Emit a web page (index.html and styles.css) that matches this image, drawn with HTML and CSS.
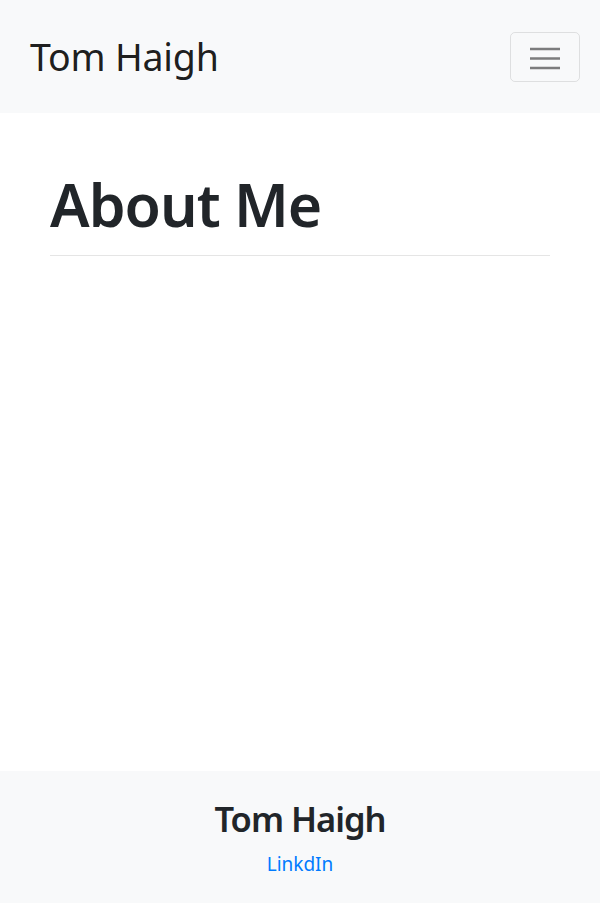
FILE: index.html
```html
<!DOCTYPE html>
<html lang="en">
<head>
<meta charset="utf-8">
<title>Tom Haigh</title>
<link rel="stylesheet" href="styles.css">
</head>
<body>
<div class="page">
  <nav class="navbar">
    <a class="brand" href="#">Tom Haigh</a>
    <button class="toggler" type="button" aria-label="Toggle navigation">
      <svg width="30" height="30" viewBox="0 0 30 30" aria-hidden="true">
        <path d="M0 7h30M0 16.5h30M0 26h30" stroke="rgba(0,0,0,0.5)" stroke-width="2.4" stroke-linecap="butt" fill="none"/>
      </svg>
    </button>
  </nav>
  <main class="content">
    <h1 class="title">About Me</h1>
    <hr class="rule">
  </main>
  <footer class="footer">
    <h2 class="footer-name">Tom Haigh</h2>
    <a class="footer-link" href="#">LinkdIn</a>
  </footer>
</div>
</body>
</html>
```

FILE: styles.css
```css
html, body {
  margin: 0;
  padding: 0;
  height: 100%;
}
body {
  font-family: "Noto Sans", "Open Sans", "DejaVu Sans", sans-serif;
  color: #212529;
  background: #fff;
}
.page {
  min-height: 903px;
  display: flex;
  flex-direction: column;
}
.navbar {
  height: 113px;
  box-sizing: border-box;
  background: #f8f9fa;
  display: flex;
  align-items: center;
  justify-content: space-between;
  padding: 0 20px 0 30px;
}
.brand {
  font-size: 37.5px;
  font-weight: 400;
  color: rgba(0,0,0,0.9);
  text-decoration: none;
  letter-spacing: -0.2px;
  line-height: 1;
}
.toggler {
  width: 70px;
  height: 50px;
  box-sizing: border-box;
  background: transparent;
  border: 1px solid rgba(0,0,0,0.1);
  border-radius: 5px;
  display: flex;
  align-items: center;
  justify-content: center;
  padding: 0;
}
.toggler svg {
  display: block;
  margin-top: 1px;
}
.content {
  flex: 1;
  padding: 0 50px;
}
.title {
  margin: 56px 0 0;
  font-size: 59px;
  font-weight: 600;
  line-height: 1.2;
  letter-spacing: -1px;
}
.rule {
  margin: 15px 0 0;
  border: 0;
  border-top: 1px solid rgba(0,0,0,0.1);
}
.footer {
  background: #f8f9fa;
  height: 132px;
  box-sizing: border-box;
  display: flex;
  flex-direction: column;
  align-items: center;
  padding-top: 27px;
}
.footer-name {
  margin: 0;
  font-size: 34.5px;
  font-weight: 600;
  line-height: 1.2;
  letter-spacing: -1px;
}
.footer-link {
  margin-top: 11px;
  font-size: 19px;
  color: #007bff;
  text-decoration: none;
  line-height: 1.5;
}
```
